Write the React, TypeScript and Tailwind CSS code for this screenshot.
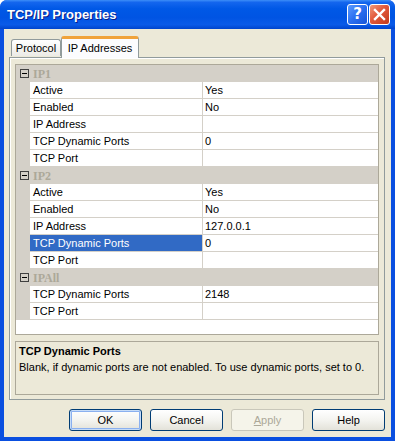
import React from 'react'

type Row = { label: string; value: string; selected?: boolean }
type Group = { name: string; rows: Row[] }

const groups: Group[] = [
  {
    name: 'IP1',
    rows: [
      { label: 'Active', value: 'Yes' },
      { label: 'Enabled', value: 'No' },
      { label: 'IP Address', value: '' },
      { label: 'TCP Dynamic Ports', value: '0' },
      { label: 'TCP Port', value: '' },
    ],
  },
  {
    name: 'IP2',
    rows: [
      { label: 'Active', value: 'Yes' },
      { label: 'Enabled', value: 'No' },
      { label: 'IP Address', value: '127.0.0.1' },
      { label: 'TCP Dynamic Ports', value: '0', selected: true },
      { label: 'TCP Port', value: '' },
    ],
  },
  {
    name: 'IPAll',
    rows: [
      { label: 'TCP Dynamic Ports', value: '2148' },
      { label: 'TCP Port', value: '' },
    ],
  },
]

const MinusBox = () => (
  <div className="w-[9px] h-[9px] border border-[#404040] flex items-center justify-center">
    <div className="w-[5px] h-px bg-black" />
  </div>
)

const Button = ({ label, isDefault, disabled }: { label: React.ReactNode; isDefault?: boolean; disabled?: boolean }) => (
  <div
    className={`w-[73px] h-[22px] rounded-[3px] border flex items-center justify-center text-[11px] ${
      disabled
        ? 'border-[#c9c7ba] bg-[#f5f4ea] text-[#aca899]'
        : 'border-[#003c74] bg-[linear-gradient(to_bottom,#ffffff_0%,#f4f4f0_50%,#e3e2d9_100%)] text-black'
    } ${isDefault ? 'shadow-[inset_0_0_0_1px_#c6dcf8,inset_0_0_0_2px_#8bb0ef]' : ''}`}
  >
    {label}
  </div>
)

const App = () => {
  return (
    <div className="w-[395px] h-[441px] flex flex-col bg-[#0a4fe0] rounded-t-[7px] overflow-hidden font-['Liberation_Sans',sans-serif] select-none">
      {/* title bar */}
      <div className="h-[29px] shrink-0 flex items-center pl-[7px] pr-[5px] bg-[linear-gradient(to_bottom,#3d8ef8_0%,#1466ee_8%,#0058e6_30%,#0054e3_60%,#0a5ae8_85%,#0044cc_100%)]">
        <span className="text-white font-bold text-[13px] [text-shadow:1px_1px_0_#0a1e8a]">
          TCP/IP Properties
        </span>
        <div className="ml-auto flex gap-[1px]">
          <div className="w-[21px] h-[21px] rounded-[3px] border border-white bg-[linear-gradient(135deg,#5b9bff_0%,#2a6ff0_50%,#1553d8_100%)] flex items-center justify-center">
            <span className="text-white font-bold text-[15px] leading-none font-['DejaVu_Sans',sans-serif]">?</span>
          </div>
          <div className="w-[21px] h-[21px] rounded-[3px] border border-white bg-[linear-gradient(135deg,#f09a7c_0%,#e2583a_45%,#c23a1c_100%)] flex items-center justify-center">
            <svg width="13" height="13" viewBox="0 0 13 13">
              <path d="M2 2 L11 11 M11 2 L2 11" stroke="white" strokeWidth="2.4" strokeLinecap="square" />
            </svg>
          </div>
        </div>
      </div>

      {/* client */}
      <div className="flex-1 mx-[4px] mb-[4px] bg-[#ece9d8] flex flex-col text-[11px] text-black">
        {/* tabs */}
        <div className="flex items-end pl-[7px] pt-[7px] h-[28px] relative z-10">
          <div className="w-[50px] h-[17px] mb-px border border-b-0 border-[#919b9c] rounded-t-[3px] bg-[linear-gradient(to_bottom,#ffffff,#ecebe6)] flex items-center justify-center pt-px">
            Protocol
          </div>
          <div className="w-[78px] h-[22px] -mb-px border border-b-0 border-[#919b9c] rounded-t-[3px] bg-[#fcfcfe] border-t-[3px] border-t-[#f0a33a] flex items-center justify-center">
            IP Addresses
          </div>
        </div>

        {/* panel */}
        <div className="ml-[5px] w-[376px] h-[343px] border border-[#919b9c] bg-[#ece9d8] shadow-[inset_1px_1px_0_#ffffff] flex flex-col px-[5px] pt-[6px]">
          {/* property grid */}
          <div className="h-[271px] border border-[#aca899] bg-white flex flex-col">
            {groups.map((g) => (
              <div key={g.name} className="flex flex-col">
                <div className="h-[17px] flex bg-[#d4d0c8]">
                  <div className="w-[14px] flex items-center justify-center pl-[2px]">
                    <MinusBox />
                  </div>
                  <div className="pl-[3px] flex items-center font-bold text-[12px] text-[#aca899] font-['Liberation_Serif',serif]">
                    {g.name}
                  </div>
                </div>
                {g.rows.map((r, i) => (
                  <div key={i} className="h-[17px] flex">
                    <div className="w-[14px] bg-[#d4d0c8]" />
                    <div
                      className={`w-[173px] border-b border-r border-[#d4d0c8] pl-[3px] flex items-center ${
                        r.selected ? 'bg-[#316ac5] text-white' : ''
                      }`}
                    >
                      {r.label}
                    </div>
                    <div className="flex-1 border-b border-[#d4d0c8] pl-[2px] flex items-center">{r.value}</div>
                  </div>
                ))}
              </div>
            ))}
            <div className="flex-1 bg-white" />
          </div>

          {/* description */}
          <div className="mt-[6px] h-[54px] border border-[#aca899] px-[3px] pt-px flex flex-col leading-[16px]">
            <div className="font-bold">TCP Dynamic Ports</div>
            <div>Blank, if dynamic ports are not enabled. To use dynamic ports, set to 0.</div>
          </div>
        </div>

        {/* buttons */}
        <div className="flex justify-end gap-[8px] pr-[6px] mt-[9px]">
          <Button label="OK" isDefault />
          <Button label="Cancel" />
          <Button
            label={
              <span>
                <span className="underline">A</span>pply
              </span>
            }
            disabled
          />
          <Button label="Help" />
        </div>
      </div>
    </div>
  )
}

export default App
